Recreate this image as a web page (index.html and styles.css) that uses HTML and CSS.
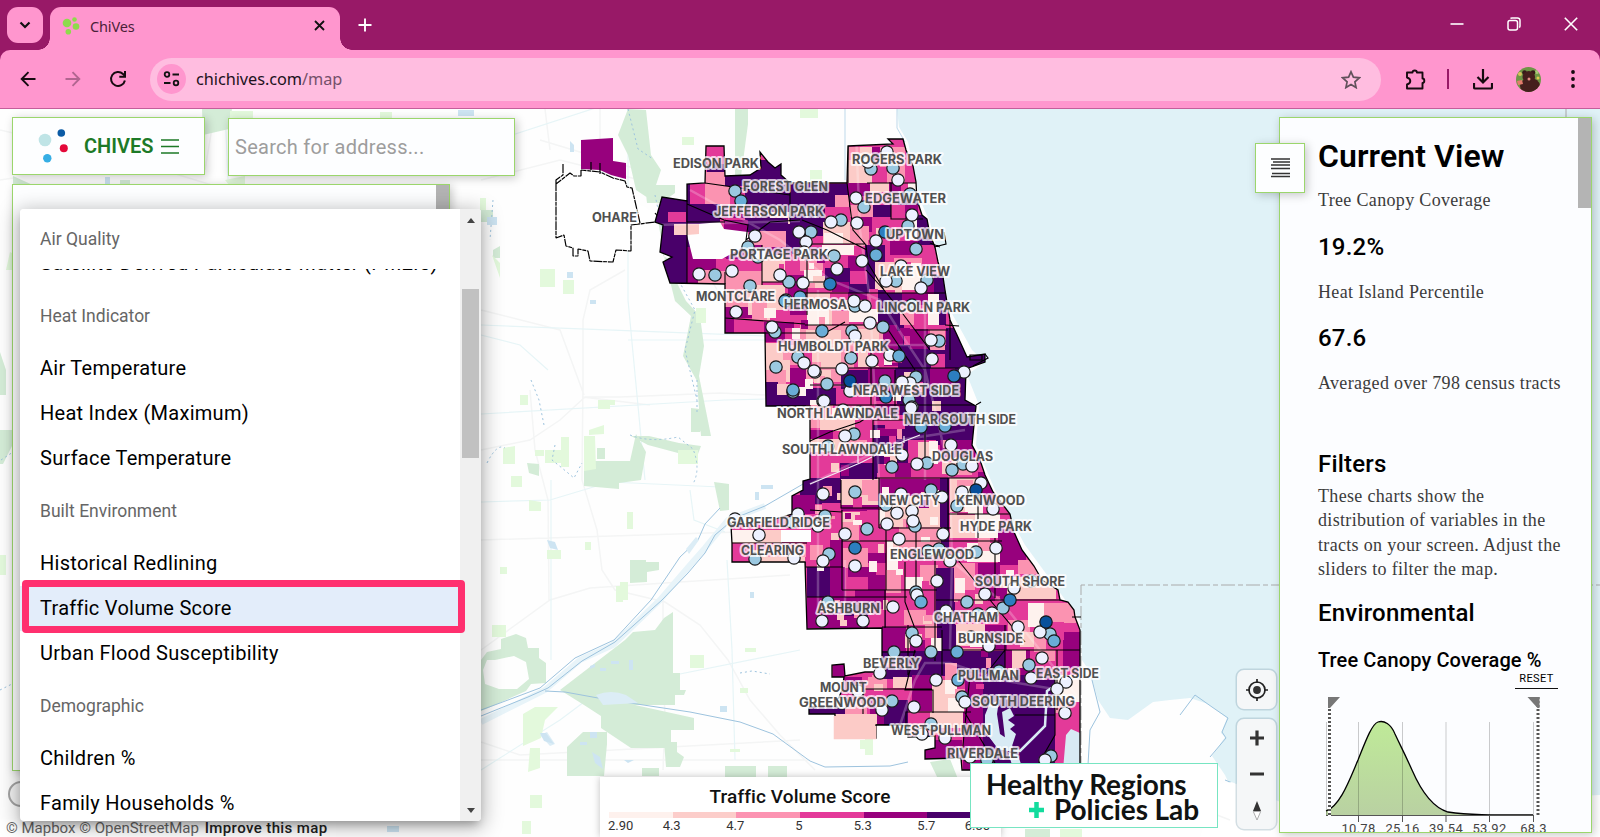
FILE: index.html
```html
<!DOCTYPE html>
<html lang="en">
<head>
<meta charset="utf-8">
<title>ChiVes</title>
<link rel="stylesheet" href="styles.css">
</head>
<body>
<div class="browser">
  <header class="tabstrip">
    <button class="tab-search" aria-label="Search tabs"><svg width="12" height="8" viewBox="0 0 12 8"><path d="M1.5 1.5 6 6l4.500-4.500" fill="none" stroke="#111" stroke-width="2.200"/></svg></button>
    <div class="tab">
      <svg class="favicon" width="18" height="18" viewBox="0 0 18 18" fill="#8edb4b"><circle cx="5" cy="6" r="4.300"/><circle cx="12.500" cy="2.500" r="2.300"/><circle cx="14" cy="9.500" r="3.300"/><circle cx="6.300" cy="14.800" r="2.800"/></svg>
      <span class="tab-title">ChiVes</span>
      <svg class="tab-close" width="11" height="11" viewBox="0 0 11 11"><path d="m1 1 9 9M10 1l-9 9" stroke="#111" stroke-width="1.800"/></svg>
    </div>
    <svg class="new-tab" width="14" height="14" viewBox="0 0 14 14"><path d="M7 .5v13M.5 7h13" stroke="#fff" stroke-width="1.900"/></svg>
    <div class="window-controls">
      <svg width="14" height="14" viewBox="0 0 14 14"><path d="M.5 7h13" stroke="#fff" stroke-width="1.600"/></svg>
      <svg width="14" height="14" viewBox="0 0 14 14" fill="none" stroke="#fff" stroke-width="1.500"><rect x="1" y="3.500" width="9.500" height="9.500" rx="2"/><path d="M3.500 1.500Q4 .9 5 .9h5.500a2.500 2.500 0 0 1 2.500 2.500V9q0 1-.8 1.500"/></svg>
      <svg width="14" height="14" viewBox="0 0 14 14"><path d="m.8.8 12.400 12.400M13.200.8.8 13.200" stroke="#fff" stroke-width="1.600"/></svg>
    </div>
  </header>
  <div class="toolbar">
    <svg class="nav back" width="16" height="16" viewBox="0 0 16 16" fill="none" stroke="#160a10" stroke-width="1.900"><path d="M15.500 8H2M8.500 1.200 1.700 8l6.800 6.800"/></svg>
    <svg class="nav forward" width="16" height="16" viewBox="0 0 16 16" fill="none" stroke="#b16590" stroke-width="1.900"><path d="M.5 8H14M7.500 1.200 14.300 8l-6.800 6.800"/></svg>
    <svg class="nav reload" width="18" height="18" viewBox="0 0 18 18" fill="none" stroke="#160a10" stroke-width="2"><path d="M15.900 10.500A7 7 0 1 1 14 4l2 2"/><path d="M16 1v5.700h-5.700"/></svg>
    <div class="omnibox">
      <span class="site-info"><svg width="17" height="16" viewBox="0 0 17 16" fill="none" stroke="#111" stroke-width="1.800"><circle cx="4" cy="3.500" r="2.300"/><path d="M9.500 3.500H16M1 12h6.500"/><circle cx="13" cy="12" r="2.300"/></svg></span>
      <span class="url">chichives.com<span class="url-path">/map</span></span>
      <svg class="star" width="20" height="19" viewBox="0 0 20 19"><path d="m10 1.800 2.400 5.400 5.900.6-4.400 4 1.200 5.800L10 14.600l-5.100 3 1.200-5.800-4.400-4 5.900-.6z" fill="none" stroke="#61505b" stroke-width="1.700"/></svg>
    </div>
    <svg class="ext" width="21" height="21" viewBox="0 0 21 21"><path d="M2 3.500h5.500q0-2 2.200-2t2.200 2H17.500V9.500q1.800 0 1.800 2.200t-1.800 2.200V19.500H2v-4q3.300-1 3.300-3.500T2 8.500z" fill="none" stroke="#160a10" stroke-width="1.900" stroke-linejoin="round"/></svg>
    <span class="divider"></span>
    <svg class="download" width="20" height="21" viewBox="0 0 20 21" fill="none" stroke="#160a10" stroke-width="2.200"><path d="M10 0v13M4.500 8l5.500 5.500L15.500 8M1 14v4.500q0 1 1 1h16q1 0 1-1V14"/></svg>
    <svg class="avatar" width="25" height="25" viewBox="0 0 25 25"><defs><clipPath id="av"><circle cx="12.500" cy="12.500" r="12.500"/></clipPath></defs><g clip-path="url(#av)"><rect width="25" height="25" fill="#6f9546"/><circle cx="4" cy="7" r="2" fill="#d9c25b"/><circle cx="21" cy="5" r="2" fill="#a9c877"/><circle cx="22" cy="11" r="1.500" fill="#e0c850"/><circle cx="8.500" cy="5.500" r="2.300" fill="#351a19"/><circle cx="17" cy="5.500" r="2.300" fill="#351a19"/><ellipse cx="12.800" cy="10" rx="6.300" ry="6" fill="#451f1d"/><ellipse cx="14" cy="19" rx="10" ry="8" fill="#451f1d"/><path d="m1 14 5-1 1 4-5 1z" fill="#e47c6d"/><circle cx="13" cy="12" r="1.500" fill="#e18c83"/></g></svg>
    <svg class="kebab" width="4" height="18" viewBox="0 0 4 18" fill="#160a10"><circle cx="2" cy="2" r="1.900"/><circle cx="2" cy="9" r="1.900"/><circle cx="2" cy="16" r="1.900"/></svg>
  </div>

  <main class="map-page">
    <svg class="map" id="map" viewBox="0 109 1600 728" width="1600" height="728"></svg>

    <nav class="brand card">
      <svg width="31" height="34" viewBox="0 0 31 34"><circle cx="7" cy="11" r="6.300" fill="#bfe4e6"/><circle cx="23.300" cy="4" r="3.800" fill="#0b5ba5"/><circle cx="25.800" cy="19.300" r="4" fill="#e4093a"/><circle cx="9.300" cy="29.300" r="4.200" fill="#36aee4"/></svg>
      <span>CHIVES</span>
      <svg width="18" height="15" viewBox="0 0 18 15"><path d="M0 1h18M0 7.500h18M0 14h18" stroke="#1d7a27" stroke-width="1.500"/></svg>
    </nav>
    <div class="search card">Search for address...</div>
    <section class="left-panel card"><i class="left-thumb"></i></section>
    <div class="mapbox-mark"></div>
    <div class="attribution"><span>© Mapbox</span> <span>© OpenStreetMap</span> <b>Improve this map</b></div>

    <section class="menu">
      <div class="menu-list">
        <h4 class="sticky">Air Quality</h4>
        <p class="tucked">Satellite-Derived Particulate Matter (PM2.5)</p>
        <h4>Heat Indicator</h4>
        <p>Air Temperature</p>
        <p>Heat Index (Maximum)</p>
        <p>Surface Temperature</p>
        <h4>Built Environment</h4>
        <p>Historical Redlining</p>
        <p class="selected">Traffic Volume Score</p>
        <p>Urban Flood Susceptibility</p>
        <h4>Demographic</h4>
        <p>Children %</p>
        <p>Family Households %</p>
      </div>
      <div class="menu-scroll"><i class="arrow-up"></i><i class="thumb"></i><i class="arrow-down"></i></div>
    </section>
    <div class="highlight"></div>

    <section class="legend">
      <h3>Traffic Volume Score</h3>
      <div class="ramp"><i></i><i></i><i></i><i></i><i></i><i></i></div>
      <div class="ticks"><span>2.90</span><span>4.3</span><span>4.7</span><span>5</span><span>5.3</span><span>5.7</span><span>6.30</span></div>
    </section>
    <div class="lab-logo"><span>Healthy Regions</span><span><svg width="15" height="16" viewBox="0 0 15 16"><path d="M7.500 0v16M0 8h15" stroke="#12dc9d" stroke-width="4.500"/></svg>Policies Lab</span></div>

    <div class="controls">
      <div class="ctl"><svg width="22" height="22" viewBox="0 0 22 22"><circle cx="11" cy="11" r="8" fill="none" stroke="#222" stroke-width="1.700"/><circle cx="11" cy="11" r="3.900" fill="#333"/><path d="M11 0v4M11 18v4M0 11h4M18 11h4" stroke="#222" stroke-width="1.700"/></svg></div>
      <div class="ctl zoom">
        <svg width="14" height="16" viewBox="0 0 14 16"><path d="M7 .5v15M0 8h14" stroke="#333" stroke-width="3.200"/></svg>
        <svg width="14" height="4" viewBox="0 0 14 4"><path d="M0 2h14" stroke="#333" stroke-width="3"/></svg>
        <svg width="10" height="20" viewBox="0 0 10 20"><path d="M1 10 5 0l4 10z" fill="#333"/><path d="M1.300 10.500 5 19l3.700-8.500z" fill="#fff" stroke="#999" stroke-width=".8"/></svg>
      </div>
    </div>

    <aside class="stats card">
      <div class="stats-body">
        <h1>Current View</h1>
        <p>Tree Canopy Coverage</p>
        <h2 class="num">19.2%</h2>
        <p>Heat Island Percentile</p>
        <h2 class="num">67.6</h2>
        <p>Averaged over 798 census tracts</p>
        <h2 class="filters">Filters</h2>
        <p class="blurb">These charts show the<br>distribution of variables in the<br>tracts on your screen. Adjust the<br>sliders to filter the map.</p>
        <h2 class="env">Environmental</h2>
        <h3>Tree Canopy Coverage %</h3>
        <div class="reset">RESET</div>
        <svg class="chart" width="230" height="142" viewBox="1320 696 230 142">
          <defs><linearGradient id="hill" x1="0" y1="0" x2="0" y2="1"><stop offset="0" stop-color="#bfea98"/><stop offset="1" stop-color="#b9d1a2"/></linearGradient></defs>
          <path d="M1326 815V810C1340 806 1349 781 1358 760 1366 740 1372 724 1378 722 1384 720 1391 724 1395 734 1401 747 1403 750 1412 770 1422 793 1434 812 1454 813 1468 815 1490 815 1533 815z" fill="url(#hill)"/>
          <path d="M1326.500 722v93M1358.500 722v93M1402.500 722v93M1446 722v93M1489.500 722v93M1533.500 722v93" stroke="#000" stroke-opacity=".2"/>
          <path d="M1326 811C1340 806 1349 781 1358 760 1366 740 1372 724 1378 722 1384 720 1391 724 1395 734 1401 747 1403 750 1412 770 1422 793 1434 808 1448 812 1468 815 1490 815 1533 815" fill="none" stroke="#000" stroke-width="1.300"/>
          <path d="M1326 815.500h207.500M1358.500 815v7M1402.500 815v7M1446 815v7M1489.500 815v7M1533.500 815v7" stroke="#555"/>
          <path d="M1329.500 697v119M1538 697v119" stroke="#fff" stroke-width="3"/>
          <path d="M1329.500 697v119M1538 697v119" stroke="#555" stroke-width="3" stroke-dasharray="2 2"/>
          <path d="M1328 697h12l-10 11h-2zM1539.500 697h-12l10 11h2z" fill="#777"/>
          <g class="axis"><text x="1358.500" y="833">10.78</text><text x="1402.500" y="833">25.16</text><text x="1446" y="833">39.54</text><text x="1489.500" y="833">53.92</text><text x="1533.500" y="833">68.3</text></g>
        </svg>
      </div>
      <i class="stats-thumb"></i>
    </aside>
    <button class="toggle card" aria-label="Toggle panel"><svg width="19" height="20" viewBox="0 0 19 20"><path d="M0 1h19M2 4h17M0 7h19M0 10.500h19M1 15.500h18M0 18.500h19" stroke="#333" stroke-width="1.500"/></svg></button>
  </main>
</div>
<script src="map.js"></script>
</body>
</html>
```
FILE: styles.css
```css
* { box-sizing: border-box; }
body { margin: 0; font-family: Roboto, sans-serif; overflow: hidden; }
h1, h2, h3, h4, p { margin: 0; }
button { padding: 0; border: 0; }
svg { display: block; flex: none; }
.browser { width: 1600px; height: 837px; display: flex; flex-direction: column; background: #981967; overflow: hidden; }

.tabstrip { height: 50px; display: flex; padding: 7px 0 0 7px; align-items: flex-start; }
.tab-search { width: 36px; height: 36px; border-radius: 11px; background: #ff96ce; display: grid; place-items: center; }
.tab { position: relative; width: 290px; height: 43px; margin-left: 7px; background: #ff96ce; border-radius: 11px 11px 0 0; display: flex; align-items: center; padding: 0 15px 6px 12px; }
.tab::before, .tab::after { content: ""; position: absolute; bottom: 0; width: 12px; height: 12px; }
.tab::before { left: -12px; background: radial-gradient(circle at 0 0, transparent 11.5px, #ff96ce 12px); }
.tab::after { right: -12px; background: radial-gradient(circle at 100% 0, transparent 11.5px, #ff96ce 12px); }
.tab-title { font: 14.5px "Noto Sans", sans-serif; letter-spacing: -.15px; color: #4a1f38; margin-left: 10px; }
.tab-close { margin-left: auto; }
.new-tab { margin: 11px 0 0 18px; }
.window-controls { margin-left: auto; display: flex; gap: 43px; padding: 10px 22px 0 0; }

.toolbar { height: 59px; flex: none; background: #ff96ce; border-radius: 10px 10px 0 0; border-bottom: 1px solid #c45e9b; display: flex; align-items: center; padding: 1px 25px 1px 20px; }
.forward { margin-left: 29px; }
.reload { margin-left: 28px; }
.omnibox { width: 1233px; height: 43px; border-radius: 22px; margin-left: 23px; background: #ffbde0; display: flex; align-items: center; padding: 0 20px 0 7px; }
.site-info { width: 29px; height: 30px; border-radius: 50%; background: #ff96ce; display: grid; place-items: center; }
.url { font: 16.3px "Noto Sans", sans-serif; letter-spacing: -.05px; color: #21121c; margin-left: 10px; }
.url-path { color: #74506a; }
.star { margin-left: auto; }
.ext { margin-left: 24px; }
.divider { width: 2px; height: 20px; background: #981967; margin-left: 21px; }
.download { margin-left: 24px; }
.avatar { margin-left: 23px; }
.kebab { margin-left: 30px; }

/* Everything on the map page floats over the canvas. */
.map-page { position: relative; height: 728px; flex: none; overflow: hidden; background: #fff; }
.map { position: absolute; left: 0; top: 0; }
.map .hood { font: 700 12.5px Inter, sans-serif; fill: #505050; stroke: rgba(255,255,255,.75); stroke-width: 4px; paint-order: stroke; stroke-linejoin: round; }
.card { position: absolute; background: #fdfeff; border: 1px solid #9bd66c; box-shadow: 2px 2px 9px rgba(0,0,0,.22); }

.brand { left: 12px; top: 8px; width: 193px; height: 58px; display: flex; align-items: center; padding-left: 25px; color: #1d7a27; font-weight: 600; font-size: 20px; }
.brand span { width: 70px; margin: 0 7px 0 15px; }
.search { left: 228px; top: 9px; width: 287px; height: 58px; padding-left: 6px; line-height: 57px; font-size: 20px; letter-spacing: .28px; color: #9d9d9d; }
.left-panel { left: 12px; top: 75px; width: 438px; height: 587px; }
.left-thumb { position: absolute; right: 0; top: 0; width: 13px; height: 160px; background: #b3b3b3; }
.mapbox-mark { position: absolute; left: 8px; top: 672px; width: 26px; height: 26px; border: 2px solid #a5a5a5; border-radius: 50%; background: #f3f3f3; }
.attribution { position: absolute; left: 0; bottom: 0; width: 336px; height: 18px; padding-left: 6px; line-height: 19px; font-size: 15px; color: #666; background: rgba(255,255,255,.5); white-space: nowrap; }
.attribution b { margin-left: 2px; font-weight: 500; letter-spacing: .4px; color: #222; }

.menu { position: absolute; left: 20px; top: 100px; width: 461px; height: 612px; display: flex; background: #fff; border-radius: 4px; overflow: hidden; box-shadow: 0 6px 9px -3px rgba(0,0,0,.25), 0 4px 20px 3px rgba(0,0,0,.28); }
.menu-list { width: 440px; height: 612px; overflow: hidden; }
.menu h4 { height: 60px; padding-left: 20px; line-height: 60px; font-size: 17.500px; font-weight: 400; color: #666; background: #fff; }
.menu .sticky { position: relative; z-index: 1; }
.menu p { height: 45px; padding-left: 20px; line-height: 45px; font-size: 20px; color: #000; letter-spacing: .27px; white-space: nowrap; }
.menu .tucked { margin-top: -28.5px; }
.menu .selected { background: #e3edfa; }
.menu-scroll { width: 21px; background: #f0f0f0; display: flex; flex-direction: column; align-items: center; }
.arrow-up { margin-top: 9px; border: 4px solid transparent; border-top: 0; border-bottom: 5px solid #444; }
.thumb { width: 17px; height: 169px; margin-top: 66px; background: #c1c1c1; }
.arrow-down { margin: auto 0 8px; border: 4px solid transparent; border-bottom: 0; border-top: 5px solid #444; }
.highlight { position: absolute; left: 22px; top: 471px; width: 443px; height: 53px; border: 7px solid #ff306f; border-radius: 4px; }

.legend { position: absolute; left: 600px; top: 668px; width: 401px; height: 60px; padding: 8px 10px 0 9px; background: #fff; box-shadow: 0 0 7px rgba(0,0,0,.25); }
.legend h3 { text-align: center; font-size: 19px; line-height: 23px; font-weight: 500; letter-spacing: .1px; color: #111; }
.ramp { display: flex; margin-top: 4px; height: 6px; }
.ramp i { flex: 1; background: #fef1ed; }
.ramp i:nth-child(2) { background: #fccdca; }
.ramp i:nth-child(3) { background: #fc93b2; }
.ramp i:nth-child(4) { background: #e43a9a; }
.ramp i:nth-child(5) { background: #97017d; }
.ramp i:nth-child(6) { background: #49006a; }
.ticks { display: flex; margin: 0 1px 0 -1px; font-size: 13px; line-height: 16px; color: #333; }
.ticks span { flex: 2 0 0; text-align: center; }
.ticks span:first-child { flex: 1 0 0; text-align: left; }
.ticks span:last-child { flex: 1 0 0; text-align: right; }
.lab-logo { position: absolute; left: 970px; top: 654px; width: 248px; height: 65px; background: #fff; border: 1px solid #77e5c2; font: 700 28px/25px Lato, sans-serif; color: #101312; display: flex; flex-direction: column; padding: 8px 0 0 15px; white-space: nowrap; letter-spacing: -.1px; }
.lab-logo span { display: flex; align-items: center; }
.lab-logo svg { margin: 0 10px 0 43px; }

.controls { position: absolute; left: 1237px; top: 561px; width: 39px; display: flex; flex-direction: column; gap: 10px; }
.ctl { height: 39px; background: #f5f7f8; border-radius: 7px; box-shadow: 0 0 0 1.500px rgba(130,160,175,.35); display: grid; place-items: center; }
.zoom { height: 110px; grid-template-rows: 37px 36px 37px; }

.stats { left: 1279px; top: 8px; width: 313px; height: 716px; overflow: hidden; background: #fcfdff; }
.stats-body { padding: 19px 0 0 38px; color: #000; }
.stats h1 { font-size: 32px; line-height: 38px; font-weight: 600; letter-spacing: .1px; }
.stats p { font: 18px/24.500px "Liberation Serif", serif; letter-spacing: .33px; color: #3b3b3b; white-space: nowrap; }
.stats h1 + p { margin-top: 13px; }
.stats h2 { font-size: 24px; line-height: 28px; font-weight: 500; letter-spacing: .2px; }
.stats .num { margin: 20px 0 19px; }
.stats .filters { margin-top: 54px; }
.stats .blurb { margin-top: 6px; }
.stats .env { margin-top: 17px; }
.stats h3 { margin-top: 21px; font-size: 20px; line-height: 24px; font-weight: 500; letter-spacing: .12px; }
.reset { width: 43px; height: 18px; margin-left: 197px; margin-top: -1px; text-align: center; border-bottom: 1px solid #111; font: 11px/15px Roboto, sans-serif; letter-spacing: .4px; }
.chart { margin: 7px 0 0 2px; }
.axis { font: 13px Roboto, sans-serif; letter-spacing: .3px; fill: #444; text-anchor: middle; }
.stats-thumb { position: absolute; right: 0; top: 0; width: 13px; height: 90px; background: #b4b4b4; }
.toggle { left: 1255px; top: 34px; width: 50px; height: 50px; display: grid; place-items: center; }
```
FILE: map.js
```javascript
// Draws the base map, census tracts, neighbourhood lines, sensors and labels.
const ramp = ['', '#fef2ee', '#fccbc7', '#fb93b1', '#e33a99', '#97017d', '#49006a'];
const city = 'M848 146L893 144 888 139 903 139 906 150 913 166 916 182 917 200 922 215 927 219 930 235 935 247 938 262 943 277 945 290 950 320 957 335 967 357 985 354 985 362 966 369 965 400 976 406 974 425 972 445 980 460 985 475 993 492 1010 514 1014 532 1022 550 1034 566 1042 580 1058 590 1060 600 1068 602 1074 610 1075 617 1080 630 1080 770 962 770 961 758 925 759 925 750 935 748 935 736 908 737 908 725 876 725 876 738 835 738 835 714 809 714 809 707 835 707 842 690 844 677 832 677 832 665 844 664 845 676 865 672 882 672 882 628 807 629 805 562 732 562 732 544 731 525 765 522 792 514 792 496 803 490 803 481 810 479 810 406 766 406 765 333 725 333 725 284 670 283 667 274 663 262 672 257 660 252 663 225 655 222 662 197 687 201 687 184 705 183 706 146 724 146 725 176 750 175 761 168 760 152 768 162 775 168 781 164 781 175 790 183 847 183Z';

// level x y w h
const tracts = `
6 655 180 35 105,4 668 212 18 10,5 760 190 30 30,2 674 224 26 11,4 706 146 18 18,6 707 164 18 14,3 705 172 20 34,3 720 184 12 24,4 730 184 20 22,6 725 160 65 26,6 745 184 105 50,6 687 204 33 20,5 720 205 40 13,2 770 212 20 12,5 724 220 25 12,6 748 218 40 14,4 730 232 22 18,3 752 231 38 16,6 786 228 17 26,5 744 245 18 18,5 687 247 40 38,3 698 270 64 15,4 716 258 46 13,5 726 247 25 12,3 713 283 14 8,2 762 255 25 27,4 785 255 20 30,5 762 247 30 8,
5 725 299 28 35,3 725 283 23 24,4 734 318 25 15,2 748 285 37 30,5 788 275 18 40,2 757 310 20 10,3 752 300 15 20,4 770 310 20 12,1 764 308 12 10,5 764 322 30 20,4 785 328 21 17,2 764 343 20 37,3 783 345 23 20,2 770 360 20 22,3 766 370 20 15,5 790 368 16 28,6 766 382 12 14,2 777 384 14 12,6 766 395 40 11,
2 848 147 24 36,3 848 147 12 13,5 872 147 8 13,3 880 147 25 20,4 872 170 15 12,3 887 165 18 18,4 905 165 10 18,5 848 183 23 13,2 870 183 20 9,4 870 192 17 15,5 889 182 12 14,1 908 183 9 17,6 898 192 20 13,6 800 195 35 14,3 835 195 14 13,4 825 207 26 16,6 800 218 23 18,6 873 205 18 13,3 850 205 23 12,5 860 217 13 15,4 872 217 19 20,4 892 205 13 26,5 905 205 13 14,1 905 220 12 20,6 917 215 20 30,2 823 222 27 22,1 824 233 19 11,3 850 226 19 20,4 868 240 12 15,2 876 228 12 16,4 880 232 11 25,5 890 241 28 14,
5 800 243 22 15,4 800 236 22 11,1 822 245 32 10,6 865 245 20 48,5 848 256 18 16,3 800 255 23 16,1 804 270 18 18,2 813 276 12 12,6 825 268 25 18,5 832 282 17 12,4 850 271 17 14,6 849 284 26 10,2 875 262 20 28,3 894 258 28 17,1 900 263 21 27,4 922 255 14 26,6 934 275 12 50,5 921 278 13 17,2 807 293 25 32,1 807 305 22 20,4 830 292 18 10,5 848 293 20 7,4 867 293 12 12,2 830 300 36 10,1 848 309 34 13,3 832 311 17 13,3 880 300 20 17,6 878 293 26 60,5 902 293 28 12,3 900 305 20 20,4 914 310 18 24,1 928 294 11 31,
3 800 325 50 20,2 806 330 35 39,4 800 350 12 17,3 845 325 40 28,2 858 329 21 38,5 883 331 20 35,4 868 348 16 18,6 898 345 48 25,5 910 329 18 20,3 930 330 15 20,6 946 328 40 42,4 931 354 14 14,3 841 351 13 17,
3 806 368 35 14,2 814 370 17 13,6 841 370 30 19,6 806 388 30 17,4 836 389 35 18,5 868 368 28 18,3 860 386 18 10,6 895 368 80 45,5 876 386 18 15,5 930 368 25 18,2 904 372 12 10,4 912 382 11 10,1 810 400 20 10,4 882 395 15 10,
3 810 405 23 23,1 832 408 28 14,2 820 418 36 13,4 855 420 20 20,5 810 430 23 10,2 810 439 48 14,4 810 452 50 37,3 845 440 22 14,4 858 407 18 13,5 875 404 25 13,3 905 405 12 10,6 873 425 38 48,5 877 428 25 8,6 900 403 78 42,4 885 415 20 14,4 908 440 28 23,2 918 442 17 16,1 929 441 9 33,5 940 440 35 18,3 955 457 17 18,2 942 458 17 16,4 878 464 60 14,2 884 450 13 15,5 895 463 16 14,
6 800 478 42 26,6 840 463 37 16,5 792 495 23 21,2 841 479 38 26,3 862 480 17 21,5 841 505 38 6,5 879 479 61 17,6 940 478 9 75,2 950 478 32 36,3 957 480 16 11,1 965 486 18 28,5 978 472 17 22,4 950 512 18 12,3 815 505 20 14,4 805 514 20 18,4 822 503 19 13,2 842 512 18 29,4 855 515 23 25,3 842 522 17 18,4 867 510 17 20,1 879 510 11 14,2 885 496 55 31,3 903 519 16 20,2 732 530 50 13,1 732 530 30 12,4 732 544 18 18,2 750 550 55 12,3 766 544 40 13,4 811 532 20 33,5 830 540 13 37,4 843 541 18 15,3 843 548 25 20,5 848 567 28 10,4 843 577 25 13,3 810 545 13 15,5 868 575 17 16,1 887 541 11 30,2 893 540 16 20,3 899 527 42 24,4 910 548 30 17,5 868 553 18 10,4 900 559 16 13,3 920 565 18 20,
2 950 515 25 23,1 975 514 25 24,4 990 540 12 13,5 998 529 28 36,1 967 543 33 19,4 952 540 14 12,3 978 538 12 13,6 807 567 24 31,5 830 567 15 31,5 807 597 79 31,6 845 605 23 11,4 868 609 17 19,3 820 600 20 12,5 855 590 30 15,1 905 577 18 12,4 900 589 22 30,3 886 570 15 23,5 870 590 16 15,6 936 568 19 92,3 954 563 21 39,1 955 578 10 15,5 978 563 22 24,2 1000 577 56 22,3 1018 560 20 14,5 980 588 27 14,4 965 590 15 12,
4 888 600 38 40,3 904 610 22 15,3 925 618 12 20,5 882 627 24 26,6 882 651 30 12,2 905 634 17 14,1 931 638 12 15,5 910 640 15 11,6 942 625 17 35,4 958 600 30 20,2 956 624 30 22,1 970 632 15 15,3 960 648 22 6,5 985 625 22 25,6 912 651 94 25,5 1005 650 25 26,4 985 601 25 24,3 1008 620 22 20,1 1028 603 16 24,3 1044 603 32 20,2 1020 632 14 15,3 1034 636 12 18,5 1063 632 20 36,4 1048 622 16 18,4 1030 652 28 40,3 1040 650 15 11,2 1012 650 14 18,
5 833 665 12 15,5 845 677 18 13,3 865 675 22 14,6 882 667 30 12,2 893 677 19 11,5 912 675 20 36,4 870 689 42 15,5 870 700 15 25,6 884 700 24 26,6 809 707 50 7,3 845 701 22 13,2 835 714 42 24,3 945 663 12 18,2 932 680 23 32,1 945 680 12 14,3 955 689 16 11,4 955 700 17 13,4 908 712 24 14,2 930 712 38 16,3 908 724 33 11,1 948 698 16 14,4 940 728 22 10,
5 965 673 22 40,5 963 712 28 60,6 983 675 72 97,1 1055 675 25 27,4 1055 703 25 70,3 1055 698 13 15,5 1035 668 18 12,5 925 740 37 19`
  .trim().split(',').map(s => s.trim().split(/\s+/).map(Number)).filter(t => t.length === 5);

const streets = 'M848 146V183M847 183L853 230 866 245 868 263 884 290 900 310 915 330 930 350M790 183V222M800 220L770 222 746 240 748 225 724 220 687 204M705 183 790 195M687 222h38M687 201v82M725 284v-12M762 245v40M762 282h70M807 245v70M725 318l80 6M765 333h60L845 322M800 244h65M867 183h50M891 183v36h32M802 220l25 10 40 20M800 293h75M875 293h72M884 290l-18 -20M805 325h80M885 325l30 45M915 330h33M950 320v40M806 368h160M810 385h90M871 350v55M895 370v50M825 405h150M810 441l20-9 30-10 15-10M873 420v60M873 420h52v40M875 478h110M841 480v28h37M879 478v50M879 528h72M948 478v60M948 514h75M978 478v60M810 510l32 2M842 510v80M842 541h160M886 528v62M916 528v60M935 551v110M842 590h95M805 567h38M807 597h100M885 590v38M936 600h145M905 562v40l15 40M995 538v60M990 600l35 42M882 627h60M908 625v50M942 630v45M1005 625v50M958 560l20 25M942 650h138M882 652h34M915 650l-10 40h28v23M865 689h67M863 689v25M876 725h30v-13h65M970 675l-10 100M1005 650l-20 25M1055 675v60l-20 35M1057 650v60M1015 715h40M965 713l30 50M732 543h75M805 562v35';

const sensors = {
  w: '887 152,868 162,898 180,856 198,912 215,831 222,857 223,799 232,806 242,876 241,862 261,837 269,901 266,886 281,921 288,699 274,732 271,755 236,804 252,780 275,803 283,786 300,736 312,772 327,865 306,854 301,870 323,855 336,804 363,815 372,890 355,931 340,932 359,872 361,842 369,823 401,964 372,910 383,902 382,850 391,814 371,912 407,824 401,843 410,859 412,845 436,902 455,911 408,917 464,951 445,972 466,981 483,823 494,798 514,901 494,962 492,942 497,993 509,897 513,912 511,887 524,913 521,818 526,845 534,943 534,899 539,735 519,759 535,794 558,823 561,855 566,950 561,996 548,937 581,985 594,1014 588,917 595,893 607,822 621,863 621,946 611,992 613,1018 627,1040 632,916 641,989 646,971 637,1042 658,880 673,1031 678,1066 682,858 691,936 680,1057 689,1065 713,965 702,914 707,882 710,842 703,922 734,945 738,970 757,1045 760,760 254',
  b: '735 191,871 169,893 168,864 207,910 194,841 220,908 226,811 232,916 249,834 256,715 275,748 247,758 257,789 282,750 286,775 332,798 357,776 367,855 306,896 281,927 280,883 327,852 331,939 341,912 305,851 358,793 392,827 384,885 381,916 377,909 400,854 434,828 446,892 467,927 463,963 464,952 470,855 492,886 505,931 490,957 506,792 522,825 516,867 529,915 526,829 554,755 559,928 551,939 549,976 552,1031 581,828 602,967 602,916 592,978 614,1003 608,912 633,894 652,931 652,1029 665,1050 634,999 671,892 701,962 697,931 724,1051 756,987 760',
  m: '741 201,822 331,793 390,876 255,800 297,899 356,921 602,957 652,1054 641,958 680,921 427,945 426,785 301',
  d: '885 232,830 284,954 376,886 397,855 548,1010 600',
  k: '850 381,976 490,1046 622'
};
const tone = { w: '#edf1ff', b: '#9bc9e1', m: '#69add7', d: '#2c7ebf', k: '#08509b' };

// name, left, baseline, width
const hoods = [['EDISON PARK',673,168,86],['ROGERS PARK',852,164,90],['FOREST GLEN',743,191,85],['EDGEWATER',865,203,81],['JEFFERSON PARK',714,216,110],['OHARE',592,222,45],['UPTOWN',886,239,58],['PORTAGE PARK',730,259,98],['LAKE VIEW',880,276,70],['MONTCLARE',696,301,79],['HERMOSA',784,309,63],['LINCOLN PARK',877,312,93],['HUMBOLDT PARK',778,351,111],['NEAR WEST SIDE',853,395,106],['NORTH LAWNDALE',777,418,121],['NEAR SOUTH SIDE',904,424,112],['SOUTH LAWNDALE',782,454,120],['DOUGLAS',932,461,61],['NEW CITY',880,505,60],['KENWOOD',956,505,69],['GARFIELD RIDGE',727,527,103],['HYDE PARK',960,531,72],['CLEARING',741,555,63],['ENGLEWOOD',890,559,84],['SOUTH SHORE',975,586,90],['ASHBURN',817,613,63],['CHATHAM',934,622,64],['BURNSIDE',958,643,65],['BEVERLY',863,668,57],['PULLMAN',958,680,61],['EAST SIDE',1036,678,63],['MOUNT',820,692,47],['GREENWOOD',799,707,87],['SOUTH DEERING',972,706,103],['WEST PULLMAN',891,735,100],['RIVERDALE',947,758,71]];

const park = '#d4ecd7', grass = '#e3f9dc', water = '#e8f4f9', river = '#9dc3de';
let out = `<defs><clipPath id="city"><path d="${city}"/></clipPath></defs><rect y="109" width="1600" height="728" fill="#fefefe"/>
<path d="M897 109L899 127 908 142 920 200 930 222 940 262 950 310 972 350 985 362 967 375 979 405 976 445 995 490 1025 545 1058 590 1080 620 1082 660 1090 672 1098 700 1110 718 1128 720 1153 702 1170 700 1190 698 1208 704 1227 718 1221 733 1225 737 1212 756 1225 775 1232 790 1280 803 1600 803V109Z" fill="#e0f2f7"/>
<path d="M1180 715L1195 695 1212 707 1228 718 1222 732 1226 738 1210 757M1090 672L1100 712 1090 730 1088 765M1225 780l25 10 20 30" fill="none" stroke="#9cc3de" stroke-width="1"/>
<path d="M1220 784L1232 782 1300 810 1600 795V837H1200Z" fill="#fff"/>
<path d="M1081 770V585H1600M1566 109V125" fill="none" stroke="#aaa" stroke-dasharray="14 3 5 3"/>`;
// roads
out += `<path d="M0 130L130 160 228 190M205 170L215 110M0 180L13 178M481 180L560 160 640 180 700 260 740 330M540 140L640 170M481 450L530 440 560 420 585 397 620 397 720 393 765 395M530 390L535 450 548 500 549 600M583 380L582 480 597 530 602 570 615 590 665 602 700 625 728 660 750 700 780 735 815 770M481 650L550 600 590 588 680 582 790 575M600 109V170M625 270L590 290 583 320V397L650 405M545 109L550 150M481 540L740 532M481 310L560 330 584 395M663 600V660L665 720 663 770M481 742L520 755 800 740M481 760H810M1100 770L1230 820" fill="none" stroke="#f4f5f5" stroke-width="1.500"/>
<path d="M481 414L725 400 765 399M481 502L550 500 610 482 720 487M481 145L620 100M628 109V300L645 480M628 340H765M481 325L765 336M690 490L694 520 725 532M727 560L732 650 735 760M551 480V660M481 335L520 345 548 370M481 770L560 720 600 690M650 680L800 650M225 109L228 180M1240 109" fill="none" stroke="#e7f5f7" stroke-width="1.200"/>`;
// parks, then lighter grass
out += `<g fill="${park}"><path d="M202 109h30l-3 20-26 6zM628 109l18 1 5 45 10 15-10 30-15-10-8-35-10-20zM645 185l30 0v8l-14 10h-14zM657 215l16 1-10 40 10 5 3 20 10 20 14 15 4 30-5 30 12 60-10 0-4-55-14-25 8-40-16-15-10-40z"/>
<path d="M735 109h13l0 15-8 60h-5zM584 461h46l6-27 10 18-5 28-22 3v6l-35-3zM631 436l18 0 30 7 22 3-3 8-20-1-30-8zM691 408l9 1 6 13-6 10h-9zM714 482l15 2v26l-9 1zM635 562h24v8l-12 2v10l-17 1v-12z"/>
<path d="M481 660l6-8 14-3v-10l15-5 10 4 2 10h11v10l7 5v20l-15 1-5 7-40 18-5 2zM495 660l-8 0-4 10 2 14 14 5 18 0 12-10-3-17-12-6z" fill-rule="evenodd"/>
<path d="M560 690L625 640 633 632 655 630 664 618 673 612V673h7v17h6l-2 5h-9v10h-40l59 13v12h-23v18l-40 0-30-20v-12L584 705z"/>
<path d="M567 747l16-15 24 0v12l-3 32h-37zM664 742h13v10l7 5-4 10-14 0zM642 768h17v8h-17zM725 766h31v11h-31zM768 766h19v11h-19zM930 762l20-3 8 20h-20zM1025 829h25v8h-25zM1405 815h15v9h-15zM630 560h16v20h-16zM597 448h8v11h-8zM0 352l6 18v25H0zM0 430h13v14l-10 20H0zM481 210h12v12h-12zM493 250l7-4v12h-7zM120 180h10v12h-10zM13 176l22 10-2 6H13zM630 575l12-3v9h-12zM527 463l12 1v12l-10-3z"/></g>
<g fill="${grass}"><path d="M545 450h24v13h-24zM561 437h8v30h-8zM584 436h11l1 33-12 2zM589 430l15-5v9l-15 1zM535 450h9v6h-9zM503 448l12-2v18h-12zM511 476h11v11h-11zM529 500l12 2v9h-12zM547 550h14v9h-14zM585 542h6v8h-6zM500 567h7v7h-7zM627 512h6v17h-6zM616 586h7v16h-7zM678 450h20v14h-20zM520 395h8v10h-8zM598 400h12v9h-12zM523 714l12-7 23 0-13 13-4 18-18 8zM620 582h8v18h-8zM530 748h10v20l-12 4zM530 795h12v13h-12zM522 821h9v13h-9zM682 137h12v8h-12zM690 655h14v13h-14zM745 648h11v4h-11zM740 688h8v5h-8zM865 735h8v20h-8zM860 740h5v9h-5zM492 625h14v12h-14zM800 109h18v9h-18zM810 170h12v12h-12zM696 308h10v15h-10zM540 269h15v18h-15zM563 280h11v14h-11zM605 400h10v5h-10zM1060 829h22v8h-22zM230 111h23v8h-23zM380 112h12v8h-12zM225 180l20-4v8l-15 2zM10 252l4 2v16H6zM0 555h6v20H0zM480 198h6v12h-6zM492 255l8 8v15zM730 749h10v3h-10z"/></g>`;
// waterways
out += `<g fill="none"><path d="M765 506L728 520 705 548 690 565 660 600 613 645 580 660 545 690 481 722" stroke="${water}" stroke-width="6"/><path d="M810 480L765 506 735 518 715 535 705 553 688 573 662 600 615 642 582 661 548 688 528 697 481 716M720 508L705 524 698 540 680 557 651 600 614 640 575 658 540 688 500 703 481 710M545 691L565 692 598 698 650 706 690 712 740 722 773 734 810 761 825 767 890 766 908 762" stroke="${river}"/><path d="M596 695q15-6 30 0l12 8-35 2zM686 549l10-12 3 3-10 14zM540 735l7-3 8 12-5 2z" fill="#dcedf6"/><path d="M0 690L20 680M1 460l12-8M487 463q10-20 18-15M531 380l8 20 5 25M555 445l-3 15 10 8 12 10 8-15M630 435q20 8 48 2l15 12q8 20 0 35M740 673l12-2 18 3M628 109l10 40 15 10M655 195l15 70 25 45-10 40 12 50M697 380v35M493 200l-3 40" stroke="${river}" stroke-dasharray="2 3"/><path d="M845 109V180M897 109V128L905 142" stroke="#bed9ea"/></g>
<g fill="#cde4f2"><path d="M570 141l4 4v7h-4zM600 172h4v8h-4zM567 272h6v6h-6zM590 300h6v4h-6zM547 540l8 2 3 8-8-2zM540 733l6 0 8 11-10-3zM590 666l5-2v3l-5 2zM611 661h8v3h-8zM629 660h4v10h-4zM590 732h7v6h-7zM580 742h7v3h-7zM592 752l8 5 3 12-8-6zM624 760l10 0-6 3zM600 668h6v3h-6zM720 706h7v6h-7zM750 592h4v6h-4zM761 485h12v4h-12zM755 492h4v8h-4zM147 185h15v8h-15zM105 177h5v8h-5zM458 110h16v6h-16zM487 217h10v8h-10zM387 826h12v6h-12zM605 240h8v4h-8z"/></g>`;
// O'Hare
out += `<path d="M581 140L613 138V161L626 163V179L611 175 600 170 581 169Z" fill="#97017d"/><path d="M581 170V176H574L570 173 556 184V238L564 235 566 246 573 248V256H578V249L588 251 590 261 613 262 616 250 631 251V225L655 222 659 218 655 213M640 223L632 188 627 187 625 181 613 178 600 172 581 170M563 164V175L556 180V188M591 162V170M600 163V174" fill="#fff" stroke="#000" stroke-width="1.200" stroke-linejoin="bevel" stroke-dasharray="9 .8 4 .8"/>`;

out += `<g clip-path="url(#city)"><path d="${city}" fill="#e33a99"/>`;
const rand = (n => () => (n = (n * 16807) % 2147483647) / 2147483647)(71);
for (const [c, x, y, w, h] of tracts) out += `<rect x="${x}" y="${y}" width="${w}" height="${h}" fill="${ramp[c]}"/>`;
// smaller tracts scattered between the large ones
for (let i = 0; i < 80; i++) {
  const y = 255 + rand() * 440, x = (y > 400 ? 815 : 770) + rand() * (y > 560 ? 200 : 140);
  out += `<rect x="${x | 0}" y="${y | 0}" width="${5 + rand() * 6 | 0}" height="${5 + rand() * 7 | 0}" fill="${ramp[1 + rand() * 5 | 0]}"/>`;
}
out += `<path d="M699 224L720 222 724 229 748 232 749 241 740 249 722 259 693 259 690 247 687 235 699 234ZM781 530H811V542H781Z" fill="#fefefe"/>
<path d="M985 715l4-10 10-5-2 14 3 20 12 8 1 10-15-3-13-18zM1002 712l8-4 4 8-6 4 7 5-5 4 6 5-4 12-7-8zM1066 735l5-6 9 4v37h-17zM1008 752l10 3 4 12-10-2z" fill="#d8eaf4"/><path d="M985 730l15 18 20 3 15-15 10-10 2-35 6-4" fill="none" stroke="#d8eaf4" stroke-width="2.500"/>
<path d="M690 190L780 240 830 280 880 300 905 340 925 370 940 430 950 480 952 560 950 650M655 225L800 221M855 109L860 230 870 300 880 500M810 484L900 440 965 430M950 560L1000 600 1080 700M895 740L915 680 925 663H950L1000 680 1060 690M800 345L940 345M810 385H950M818 290V620M925 300V480M845 560V610M990 430L1000 500" fill="none" stroke="#fff" stroke-opacity=".23" stroke-width="2.500"/>
<path d="M810 484L860 463 902 442 920 435M858 455v8M904 436v7" fill="none" stroke="#f3edf5" stroke-width="1.200"/>
<path d="${streets}" fill="none" stroke="#000" stroke-width="1.100"/></g>
<path d="${city}" fill="none" stroke="#000" stroke-width="1.300"/><path d="M835 716V738H875V726" fill="none" stroke="#fccbc7" stroke-width="2.500"/>
<path d="M934 247l12-3-2-12M930 243l10 4M985 354l3 4-15 8M945 325l14 1M970 355h12v5h-12zM976 405l5-3M1072 617h9" fill="none" stroke="#000" stroke-width="1.200"/>`;
for (const k of ['b', 'w', 'm', 'd', 'k'])
  for (const p of sensors[k].split(',')) {
    const [x, y] = p.split(' ');
    out += `<circle cx="${x}" cy="${y}" r="6.200" fill="${tone[k]}" stroke="#171717" stroke-width="1.200"/>`;
  }
for (const [t, x, y, w] of hoods) out += `<text class="hood" x="${x}" y="${y}" textLength="${w}" lengthAdjust="spacingAndGlyphs">${t}</text>`;
document.getElementById('map').innerHTML = out;
```
